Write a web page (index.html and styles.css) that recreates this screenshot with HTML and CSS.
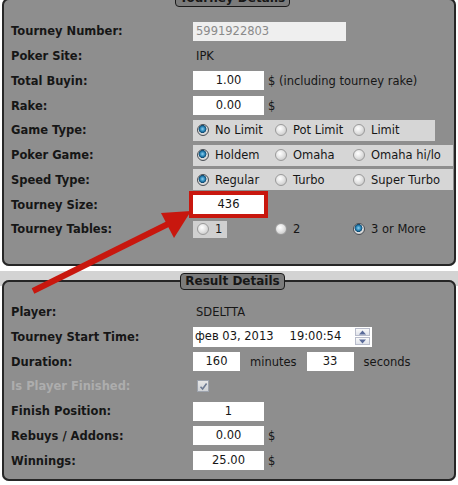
FILE: index.html
```html
<!DOCTYPE html>
<html lang="en">
<head>
    <meta charset="UTF-8">
    <title>Tourney Details</title>
    <link rel="stylesheet" href="styles.css">
</head>
<body>

    <div class="page">

        <fieldset class="panel panel-tourney">
            <legend>Tourney Details</legend>

            <div class="row">
                <span class="label">Tourney Number:</span>
                <span class="field field-long field-readonly">5991922803</span>
            </div>
            <div class="row">
                <span class="label">Poker Site:</span>
                <span class="value">IPK</span>
            </div>
            <div class="row">
                <span class="label">Total Buyin:</span>
                <span class="field">1.00</span>
                <span class="unit">$ (including tourney rake)</span>
            </div>
            <div class="row">
                <span class="label">Rake:</span>
                <span class="field">0.00</span>
                <span class="unit">$</span>
            </div>
            <div class="row">
                <span class="label">Game Type:</span>
                <div class="choices choices-short">
                    <span class="choice"><i class="radio checked"></i>No Limit</span>
                    <span class="choice"><i class="radio"></i>Pot Limit</span>
                    <span class="choice"><i class="radio"></i>Limit</span>
                </div>
            </div>
            <div class="row">
                <span class="label">Poker Game:</span>
                <div class="choices">
                    <span class="choice"><i class="radio checked"></i>Holdem</span>
                    <span class="choice"><i class="radio"></i>Omaha</span>
                    <span class="choice"><i class="radio"></i>Omaha hi/lo</span>
                </div>
            </div>
            <div class="row">
                <span class="label">Speed Type:</span>
                <div class="choices">
                    <span class="choice"><i class="radio checked"></i>Regular</span>
                    <span class="choice"><i class="radio"></i>Turbo</span>
                    <span class="choice"><i class="radio"></i>Super Turbo</span>
                </div>
            </div>
            <div class="row">
                <span class="label">Tourney Size:</span>
                <span class="highlight"><span class="field">436</span></span>
            </div>
            <div class="row">
                <span class="label">Tourney Tables:</span>
                <div class="choices choices-plain">
                    <span class="choice choice-hover"><i class="radio"></i>1</span>
                    <span class="choice"><i class="radio"></i>2</span>
                    <span class="choice"><i class="radio checked"></i>3 or More</span>
                </div>
            </div>
        </fieldset>

        <div class="result-wrap">
            <fieldset class="panel panel-result">
                <legend>Result Details</legend>

                <div class="row">
                    <span class="label">Player:</span>
                    <span class="value">SDELTTA</span>
                </div>
                <div class="row">
                    <span class="label">Tourney Start Time:</span>
                    <span class="field field-date">
                        <span class="date-text">фев 03, 2013</span>
                        <span class="time-text">19:00:54</span>
                        <span class="spinner">
                            <span class="spin-btn"><svg width="9" height="5" viewBox="0 0 9 5"><path d="M4.5 0.5 L8 4.5 L1 4.5 Z" fill="#5a6b99"/></svg></span>
                            <span class="spin-btn"><svg width="9" height="5" viewBox="0 0 9 5"><path d="M1 0.5 L8 0.5 L4.5 4.5 Z" fill="#5a6b99"/></svg></span>
                        </span>
                    </span>
                </div>
                <div class="row">
                    <span class="label">Duration:</span>
                    <span class="field field-short">160</span>
                    <span class="unit unit-wide">minutes</span>
                    <span class="field field-short">33</span>
                    <span class="unit unit-wide">seconds</span>
                </div>
                <div class="row">
                    <span class="label label-disabled">Is Player Finished:</span>
                    <span class="checkbox">
                        <svg width="9" height="9" viewBox="0 0 9 9"><path d="M1.5 4.8 L3.6 7 L7.6 1.6" fill="none" stroke="#6d7a92" stroke-width="1.6"/></svg>
                    </span>
                </div>
                <div class="row">
                    <span class="label">Finish Position:</span>
                    <span class="field">1</span>
                </div>
                <div class="row">
                    <span class="label">Rebuys / Addons:</span>
                    <span class="field">0.00</span>
                    <span class="unit">$</span>
                </div>
                <div class="row">
                    <span class="label">Winnings:</span>
                    <span class="field">25.00</span>
                    <span class="unit">$</span>
                </div>
            </fieldset>
        </div>

        <!-- стрелка поверх обоих блоков -->
        <svg class="arrow" width="458" height="485" viewBox="0 0 458 485">
            <line x1="33" y1="291" x2="172" y2="222" stroke="#c8170e" stroke-width="6"/>
            <path d="M191 211 L161 213 L174 238 Z" fill="#c8170e"/>
        </svg>

    </div>

</body>
</html>
```

FILE: styles.css
```css
:root {
    --panel-color: #8e8e8e;
    --legend-color: #7b7b7b;
    --border-color: #262626;
    --text-color: #161616;
    --choice-color: #d6d6d6;
    --red: #c8170e;
}

body {
    margin: 0;
    background: #fff;
    font-family: "DejaVu Sans", Verdana, sans-serif;
    font-size: 11.5px;
    color: var(--text-color);
}

.page {
    position: relative;
    width: 458px;
    height: 485px;
    overflow: hidden;
}

/* --- Panels --- */
.panel {
    margin: -10px 2px 0 2px;
    padding: 12px 0 22px 7px;
    border: 2px solid var(--border-color);
    border-radius: 7px;
    background: var(--panel-color);
    min-inline-size: 0;
}

.panel legend {
    margin: 0 auto;
    padding: 0 4px;
    height: 15px;
    line-height: 15px;
    background: var(--legend-color);
    border: 1px solid #1a1a1a;
    border-radius: 4px;
    font-weight: bold;
    font-size: 12px;
}

.result-wrap {
    padding-top: 7px;
    background: linear-gradient(to bottom, #fff 0, #fff 5px, #d3d3d3 5px, #d3d3d3 20px, #fff 20px);
}

.panel-result {
    margin: 0 2px;
    padding: 10px 0 6px 7px;
}

/* --- Rows --- */
.row {
    display: flex;
    align-items: center;
    height: 24.75px;
}

.label {
    flex: 0 0 182px;
    font-weight: bold;
}

.label-disabled {
    color: #adadad;
}

.value {
    padding-left: 3px;
}

.field {
    display: inline-block;
    box-sizing: border-box;
    width: 71px;
    height: 19px;
    line-height: 19px;
    background: #fff;
    text-align: center;
}

.field-long {
    width: 153px;
    text-align: left;
    padding-left: 3px;
}

.field-readonly {
    background: #efefef;
    color: #8a8a8a;
}

.field-short {
    width: 47px;
}

.field-date {
    display: flex;
    align-items: center;
    width: 179px;
    height: 20px;
    padding-left: 2px;
    text-align: left;
}

.time-text {
    margin-left: 16px;
}

.spinner {
    display: flex;
    flex-direction: column;
    gap: 1px;
    margin-left: auto;
    margin-right: 2px;
}

.spin-btn {
    display: flex;
    align-items: center;
    justify-content: center;
    width: 13px;
    height: 6px;
    border: 1px solid #b8bccb;
    background: linear-gradient(#fafafa, #dfe2ea);
}

.unit {
    margin-left: 4px;
}

.unit-wide {
    margin: 0 10px;
}

.highlight {
    display: inline-block;
    margin-left: -4px;
    border: 4px solid var(--red);
    line-height: 0;
}

.checkbox {
    display: flex;
    align-items: center;
    justify-content: center;
    box-sizing: border-box;
    width: 12px;
    height: 12px;
    margin-left: 4px;
    border: 1px solid #9da3ad;
    background: linear-gradient(#e6e6e6, #cfd2d6);
}

/* --- Radio groups --- */
.choices {
    display: flex;
    align-items: center;
    width: 260px;
    height: 21px;
    background: var(--choice-color);
}

.choices-short {
    width: 242px;
}

.choices-plain {
    background: none;
}

.choice {
    display: flex;
    align-items: center;
    flex: 0 0 78px;
    box-sizing: border-box;
    padding-left: 4px;
    height: 100%;
    white-space: nowrap;
}

.choices-plain .choice {
    height: 17px;
}

.choice-hover {
    flex-basis: 34px;
    margin-right: 44px;
    background: #d0d0d0;
}

.choice:last-child {
    flex: 1 1 auto;
}

.radio {
    display: inline-block;
    box-sizing: border-box;
    width: 12px;
    height: 12px;
    margin-right: 6px;
    border: 1px solid #9a9a9a;
    border-radius: 50%;
    background: radial-gradient(circle at 40% 35%, #ffffff 0, #e4e4e4 45%, #bdbdbd 100%);
}

.radio.checked {
    border-color: #4a4f55;
    background: radial-gradient(circle at 45% 40%, #8fd0f0 0, #2a86b8 28%, #0e4a72 45%, #e0e0e0 52%, #b8b8b8 100%);
}

/* --- Стрелка --- */
.arrow {
    position: absolute;
    top: 0;
    left: 0;
    pointer-events: none;
}
```
